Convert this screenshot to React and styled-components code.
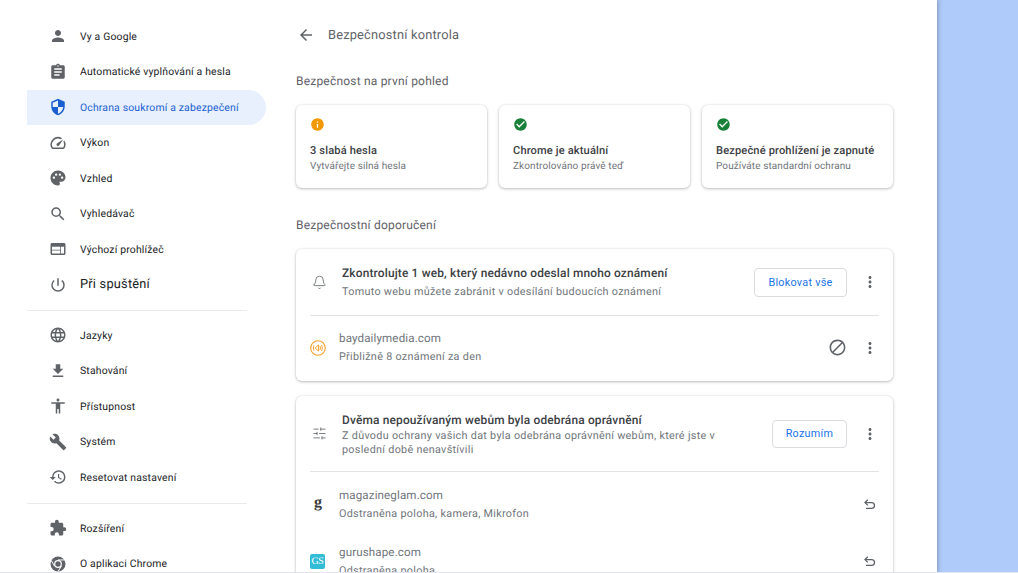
import React from "react";
import styled, { createGlobalStyle } from "styled-components";
import {
  MdPerson, MdAssignment, MdSecurity, MdSpeed, MdPalette, MdSearch, MdWeb, MdPowerSettingsNew,
  MdLanguage, MdFileDownload, MdAccessibility, MdBuild, MdHistory, MdExtension, MdMoreVert, MdBlock,
  MdArrowBack, MdInfo, MdCheckCircle,
} from "react-icons/md";
import { Bell, SlidersHorizontal } from "lucide-react";

const Global = createGlobalStyle`
  html, body { margin: 0; padding: 0; background: #fff; }
  body { font-family: Roboto, "Liberation Sans", sans-serif; -webkit-font-smoothing: antialiased; text-rendering: geometricPrecision; }
  * { box-sizing: border-box; }
`;

const Screen = styled.div`
  width: 1018px; height: 573px; display: flex; overflow: hidden;
  border-bottom: 1px solid #e2e3ec; background: #aecbfa;
`;
const Panel = styled.div`
  width: 937px; height: 100%; flex: none; display: flex; overflow: hidden; background: #fff;
  box-shadow: 1px 0 4px rgba(60, 64, 67, 0.4); position: relative;
`;
const Sidebar = styled.nav`
  width: 266px; flex: none; padding: 18.5px 0 0 27px;
`;
const NavItem = styled.div`
  width: 239px; height: 35.5px; display: flex; align-items: center; padding-left: 21.5px; gap: 13.5px;
  border-radius: 0 18px 18px 0;
  background: ${p => (p.$active ? "#e8f0fe" : "transparent")};
  color: ${p => (p.$active ? "#1a5fd0" : "#202124")};
  font-size: ${p => (p.$big ? "12.8px" : "10.4px")};
  letter-spacing: ${p => (p.$big ? "0.22px" : "0.18px")};
  svg { flex: none; width: 18px; height: 18px; color: ${p => (p.$active ? "#1a5fd0" : "#5f6368")}; }
`;
const NavDivider = styled.div`
  width: 220px; height: 1px; background: #e8eaed; margin: ${p => p.$m || "7px 0"};
`;
const Main = styled.main`
  width: 597px; margin-left: 30px; flex: none;
`;
const Header = styled.header`
  height: 74px; display: flex; align-items: center; gap: 13.5px; padding: 0 0 4px 0.5px; color: #5f6368;
  font-size: 12.8px; letter-spacing: 0.2px;
  svg { width: 18px; height: 18px; flex: none; }
`;
const SectionTitle = styled.h2`
  margin: 0; font-weight: 400; font-size: 12px; letter-spacing: 0.2px; line-height: 14px; color: #5f6368;
`;
const Cards = styled.div`
  display: grid; grid-template-columns: repeat(3, 191px); gap: 12px; margin: 17px 0 30px;
`;
const Summary = styled.div`
  height: 83px; padding: 12px 14px; background: #fff; border-radius: 6px;
  box-shadow: 0 1px 3px rgba(60, 64, 67, 0.32), 0 0 2px rgba(60, 64, 67, 0.12);
`;
const StatusIcon = styled.div`
  height: 15px; margin-left: -0.5px; line-height: 0; color: ${p => p.$c};
  svg { width: 15px; height: 15px; }
`;
const SummaryTitle = styled.div`
  margin-top: 11.5px; font-size: 11.1px; line-height: 14px; letter-spacing: 0.14px; font-weight: 500; color: #3c4043;
`;
const SummaryText = styled.div`
  margin-top: 3.5px; font-size: 10px; line-height: 12px; letter-spacing: 0.1px; color: #70757a;
`;
const Card = styled.section`
  margin-top: ${p => p.$mt || 0}; background: #fff; border-radius: 6px; padding: 0 14px;
  box-shadow: 0 1px 3px rgba(60, 64, 67, 0.32), 0 0 2px rgba(60, 64, 67, 0.12);
`;
const CardHead = styled.div`
  height: ${p => p.$h}; display: flex; align-items: center; border-bottom: 1px solid #e3e4e6;
`;
const HeadIcon = styled.div`
  width: 32px; flex: none; line-height: 0; padding-left: 1.5px; color: #5f6368;
  svg { width: 15px; height: 15px; }
`;
const HeadText = styled.div`
  flex: 1; min-width: 0; padding: ${p => p.$pad || "0 40px 0 0"};
`;
const HeadTitle = styled.div`
  font-size: 11.9px; line-height: 15px; font-weight: 500; letter-spacing: 0.17px; color: #3c4043;
`;
const HeadDesc = styled.div`
  margin-top: ${p => p.$gap || "4px"}; font-size: 10.8px; line-height: 14px; letter-spacing: 0.3px; color: #70757a;
`;
const Action = styled.button`
  flex: none; width: ${p => p.$w}; height: ${p => p.$hh || "29px"}; background: #fff; border: 1px solid #dadce0;
  border-radius: 4px; font: 400 10.8px Roboto, sans-serif; letter-spacing: 0.28px; color: #1a73e8; padding: 0;
`;
const Kebab = styled.div`
  flex: none; width: 32px; display: flex; justify-content: flex-end; color: #5f6368; line-height: 0;
  svg { width: 18px; height: 18px; }
`;
const SiteList = styled.div`
  padding-top: ${p => p.$pt || "0"}; padding-bottom: ${p => p.$pb || "0"};
`;
const SiteRow = styled.div`
  height: ${p => p.$h || "57px"}; display: flex; align-items: center;
`;
const Fav = styled.div`
  width: 29px; flex: none; display: flex; line-height: 0;
`;
const SiteText = styled.div`
  flex: 1; color: #70757a;
`;
const SiteName = styled.div`
  font-size: 11.6px; line-height: 15px; letter-spacing: 0.12px;
`;
const SiteDesc = styled.div`
  margin-top: 3px; font-size: 10.8px; line-height: 15px; letter-spacing: 0.3px;
`;
const RowAction = styled.div`
  flex: none; line-height: 0; color: #5f6368; margin-right: ${p => p.$mr || "0"};
  svg { width: ${p => p.$s || "19px"}; height: ${p => p.$s || "19px"}; }
`;
const SerifG = styled.span`
  font: 700 16px/16px "Liberation Serif", serif; color: #3c3c3c; margin: -3px 0 0 4px;
`;
const GsBadge = styled.span`
  width: 15px; height: 15px; border-radius: 2px; background: #34bcd6; color: #fff;
  font: 400 10px/15px "Liberation Serif", serif; text-align: center; letter-spacing: -0.5px;
`;

const ChromeIcon = () => (
  <svg viewBox="0 0 24 24" fill="none">
    <circle cx="12" cy="12" r="10" fill="#5f6368" />
    <circle cx="12" cy="12" r="5.2" fill="#fff" />
    <circle cx="12" cy="12" r="3.6" fill="#5f6368" />
    <path d="M12 6.6h9M7.3 14.7 2.9 7.1M16.6 14.7 12 22" stroke="#fff" strokeWidth="1.3" />
  </svg>
);

const BayIcon = () => (
  <svg width="16" height="16" viewBox="0 0 16 16" fill="none" stroke="#f5a02a">
    <circle cx="8" cy="8" r="7.3" strokeWidth="1.1" />
    <path d="M3.9 5.6c-.8 1.4-.8 3.4 0 4.8" strokeWidth="1" strokeLinecap="round" />
    <path d="M8.4 4.8v6.4L5.3 8z" strokeWidth="1" strokeLinejoin="round" />
    <path d="M10 6.3c.5 1 .5 2.4 0 3.4M11.6 5.2c.9 1.7.9 3.9 0 5.6" strokeWidth="1" strokeLinecap="round" />
  </svg>
);

const UndoIcon = () => (
  <svg viewBox="0 0 14 14" fill="none" stroke="#5f6368" strokeWidth="1.3">
    <path d="M4.8 1.8 2 4.6l2.8 2.8" />
    <path d="M2 4.6h6.6a2.9 2.9 0 0 1 0 5.8H3" />
  </svg>
);

const nav1 = [
  [MdPerson, "Vy a Google"], [MdAssignment, "Automatické vyplňování a hesla"],
  [MdSecurity, "Ochrana soukromí a zabezpečení", true], [MdSpeed, "Výkon"], [MdPalette, "Vzhled"],
  [MdSearch, "Vyhledávač"], [MdWeb, "Výchozí prohlížeč"],
];
const nav2 = [
  [MdLanguage, "Jazyky"], [MdFileDownload, "Stahování"], [MdAccessibility, "Přístupnost"],
  [MdBuild, "Systém"], [MdHistory, "Resetovat nastavení"],
];
const nav3 = [[MdExtension, "Rozšíření"], [ChromeIcon, "O aplikaci Chrome"]];
const summaries = [
  [MdInfo, "#f29900", "3 slabá hesla", "Vytvářejte silná hesla"],
  [MdCheckCircle, "#188038", "Chrome je aktuální", "Zkontrolováno právě teď"],
  [MdCheckCircle, "#188038", "Bezpečné prohlížení je zapnuté", "Používáte standardní ochranu"],
];

const NavGroup = ({ items }) =>
  items.map(([Icon, label, active]) => (
    <NavItem key={label} $active={active}><Icon />{label}</NavItem>
  ));

export default function App() {
  return (
    <Screen>
      <Global />
      <Panel>
        <Sidebar>
          <NavGroup items={nav1} />
          <NavItem $big><MdPowerSettingsNew />Při spuštění</NavItem>
          <NavDivider $m="7px 0 7px" />
          <NavGroup items={nav2} />
          <NavDivider $m="7.5px 0 7px" />
          <NavGroup items={nav3} />
        </Sidebar>
        <Main>
          <Header><MdArrowBack />Bezpečnostní kontrola</Header>
          <SectionTitle>Bezpečnost na první pohled</SectionTitle>
          <Cards>
            {summaries.map(([Icon, c, t, d]) => (
              <Summary key={t}>
                <StatusIcon $c={c}><Icon /></StatusIcon>
                <SummaryTitle>{t}</SummaryTitle>
                <SummaryText>{d}</SummaryText>
              </Summary>
            ))}
          </Cards>
          <SectionTitle>Bezpečnostní doporučení</SectionTitle>
          <Card $mt="17px">
            <CardHead $h="67px">
              <HeadIcon><Bell strokeWidth={1.3} /></HeadIcon>
              <HeadText>
                <HeadTitle>Zkontrolujte 1 web, který nedávno odeslal mnoho oznámení</HeadTitle>
                <HeadDesc>Tomuto webu můžete zabránit v odesílání budoucích oznámení</HeadDesc>
              </HeadText>
              <Action $w="93px">Blokovat vše</Action>
              <Kebab><MdMoreVert /></Kebab>
            </CardHead>
            <SiteList $pb="2px">
              <SiteRow $h="63px">
                <Fav><BayIcon /></Fav>
                <SiteText>
                  <SiteName>baydailymedia.com</SiteName>
                  <SiteDesc>Přibližně 8 oznámení za den</SiteDesc>
                </SiteText>
                <RowAction><MdBlock /></RowAction>
                <Kebab><MdMoreVert /></Kebab>
              </SiteRow>
            </SiteList>
          </Card>
          <Card $mt="15px">
            <CardHead $h="76px">
              <HeadIcon><SlidersHorizontal strokeWidth={1.3} /></HeadIcon>
              <HeadText $pad="2px 40px 0 0">
                <HeadTitle>Dvěma nepoužívaným webům byla odebrána oprávnění</HeadTitle>
                <HeadDesc $gap="1px">Z důvodu ochrany vašich dat byla odebrána oprávnění webům, které jste v poslední době nenavštívili</HeadDesc>
              </HeadText>
              <Action $w="75px" $hh="28px">Rozumím</Action>
              <Kebab><MdMoreVert /></Kebab>
            </CardHead>
            <SiteList $pt="4px">
              <SiteRow>
                <Fav><SerifG>g</SerifG></Fav>
                <SiteText>
                  <SiteName>magazineglam.com</SiteName>
                  <SiteDesc>Odstraněna poloha, kamera, Mikrofon</SiteDesc>
                </SiteText>
                <RowAction $mr="2px" $s="14px"><UndoIcon /></RowAction>
              </SiteRow>
              <SiteRow>
                <Fav><GsBadge>GS</GsBadge></Fav>
                <SiteText>
                  <SiteName>gurushape.com</SiteName>
                  <SiteDesc>Odstraněna poloha</SiteDesc>
                </SiteText>
                <RowAction $mr="2px" $s="14px"><UndoIcon /></RowAction>
              </SiteRow>
            </SiteList>
          </Card>
        </Main>
      </Panel>
    </Screen>
  );
}
